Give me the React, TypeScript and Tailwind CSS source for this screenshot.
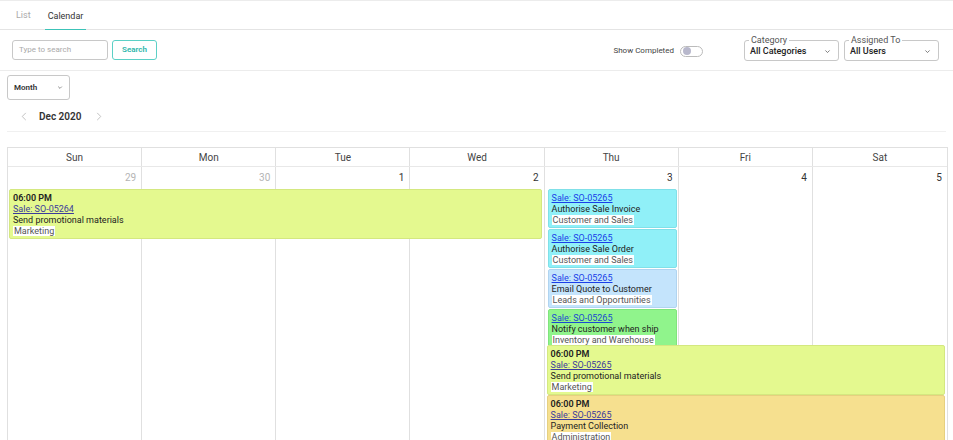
import React from 'react';

interface CalEvent {
  id: number;
  bg: string;
  link: string;
  time?: string;
  sale: string;
  title: string;
  tag: string;
}

const days = ['Sun', 'Mon', 'Tue', 'Wed', 'Thu', 'Fri', 'Sat'];
const dates = [
  { n: 29, muted: true },
  { n: 30, muted: true },
  { n: 1, muted: false },
  { n: 2, muted: false },
  { n: 3, muted: false },
  { n: 4, muted: false },
  { n: 5, muted: false },
];

const lime = 'bg-[#e4f98f] border-[#d4e880]';
const cyan = 'bg-[#90f0f8] border-[#80e0e8]';

const sunEvent: CalEvent = {
  id: 1,
  bg: lime,
  link: 'text-[#3b3b9c]',
  time: '06:00 PM',
  sale: 'Sale: SO-05264',
  title: 'Send promotional materials',
  tag: 'Marketing',
};

const thuEvents: CalEvent[] = [
  {
    id: 2,
    bg: cyan,
    link: 'text-[#1a3ee8]',
    sale: 'Sale: SO-05265',
    title: 'Authorise Sale Invoice',
    tag: 'Customer and Sales',
  },
  {
    id: 3,
    bg: cyan,
    link: 'text-[#1a3ee8]',
    sale: 'Sale: SO-05265',
    title: 'Authorise Sale Order',
    tag: 'Customer and Sales',
  },
  {
    id: 4,
    bg: 'bg-[#c4e4fc] border-[#b0d4f0]',
    link: 'text-[#1a3ee8]',
    sale: 'Sale: SO-05265',
    title: 'Email Quote to Customer',
    tag: 'Leads and Opportunities',
  },
  {
    id: 5,
    bg: 'bg-[#90f48c] border-[#80e47c]',
    link: 'text-[#1a4ad0]',
    sale: 'Sale: SO-05265',
    title: 'Notify customer when ship',
    tag: 'Inventory and Warehouse',
  },
];

const spanEvents: CalEvent[] = [
  {
    id: 6,
    bg: lime,
    link: 'text-[#3b3b9c]',
    time: '06:00 PM',
    sale: 'Sale: SO-05265',
    title: 'Send promotional materials',
    tag: 'Marketing',
  },
  {
    id: 7,
    bg: 'bg-[#f6e08f] border-[#e6d080]',
    link: 'text-[#3b3b9c]',
    time: '06:00 PM',
    sale: 'Sale: SO-05265',
    title: 'Payment Collection',
    tag: 'Administration',
  },
];

const Chevron: React.FC<{ className?: string }> = ({ className }) => (
  <svg viewBox="0 0 10 6" className={className} fill="none" stroke="currentColor" strokeWidth="1.2">
    <path d="M2 1.5 L5 4.5 L8 1.5" />
  </svg>
);

const OutlinedSelect: React.FC<{ label: string; value: string }> = ({ label, value }) => (
  <div className="relative h-[21px] w-[95px] rounded-[3px] border border-[#c8c8c8]">
    <span className="absolute -top-[6px] left-[4px] bg-white px-[2px] text-[9px] leading-[10px] text-[#555]">
      {label}
    </span>
    <div className="flex h-full items-center justify-between pl-[5px] pr-[7px] pt-[2px]">
      <span className="text-[9px] font-medium text-[#222]">{value}</span>
      <Chevron className="h-[5px] w-[7px] text-[#666]" />
    </div>
  </div>
);

const EventCard: React.FC<{ ev: CalEvent; className: string }> = ({ ev, className }) => (
  <div
    className={`${className} ${ev.bg} shrink-0 overflow-hidden rounded-[2px] border px-[3px] pt-[3px] text-[9px] leading-[11px] text-[#222]`}
  >
    {ev.time && <div className="font-semibold">{ev.time}</div>}
    <div className={`underline ${ev.link}`}>{ev.sale}</div>
    <div>{ev.title}</div>
    <div>
      <span className="bg-white px-[1px] text-[#555]">{ev.tag}</span>
    </div>
  </div>
);

const App: React.FC = () => {
  return (
    <div
      className="h-[440px] w-[953px] overflow-hidden border-t border-[#ececec] bg-white text-[#333]"
      style={{ fontFamily: 'Roboto, "Noto Sans", sans-serif' }}
    >
      <div className="flex h-[29px] items-end gap-[14px] border-b border-[#e4e4e4] pl-[16px]">
        <div className="pb-[7px] text-[9px] text-[#aaa]">List</div>
        <div className="-mb-px border-b-[1.5px] border-[#3cc3b8] px-[3px] pb-[6px] text-[9px] text-[#333]">
          Calendar
        </div>
      </div>

      <div className="flex h-[41px] items-center border-b border-[#ececec] pl-[12px] pr-[14px]">
        <div className="flex h-[20px] w-[96px] items-center rounded-[3px] border border-[#c8c8c8] px-[6px] text-[8px] text-[#aaa]">
          Type to search
        </div>
        <button className="ml-[4px] h-[20px] w-[45px] rounded-[3px] border border-[#5cd0c6] text-[8px] font-semibold text-[#2bb5aa]">
          Search
        </button>
        <div className="ml-auto flex items-center gap-[6px] pt-[2px]">
          <span className="text-[8px] text-[#444]">Show Completed</span>
          <div className="flex h-[11px] w-[23px] items-center rounded-full border border-[#bbb] px-[2px]">
            <div className="h-[8px] w-[8px] rounded-full bg-[#b8b8cc]" />
          </div>
        </div>
        <div className="ml-[41px] flex gap-[5px] pt-[1px]">
          <OutlinedSelect label="Category" value="All Categories" />
          <OutlinedSelect label="Assigned To" value="All Users" />
        </div>
      </div>

      <div className="px-[7px] pt-[4px]">
        <div className="flex h-[25px] w-[63px] items-center justify-between rounded-[3px] border border-[#c8c8c8] pl-[6px] pr-[6px]">
          <span className="text-[8px] font-semibold text-[#333]">Month</span>
          <Chevron className="h-[5px] w-[6px] text-[#666]" />
        </div>
        <div className="mt-[8px] flex h-[24px] items-center border-b border-[#f0f0f0] pb-[7px]">
          <svg viewBox="0 0 6 10" className="ml-[14px] h-[9px] w-[6px] text-[#bbb]" fill="none" stroke="currentColor" strokeWidth="1">
            <path d="M5 1 L1 5 L5 9" />
          </svg>
          <span className="ml-[12px] text-[10px] font-semibold text-[#333]">Dec 2020</span>
          <svg viewBox="0 0 6 10" className="ml-[15px] h-[9px] w-[6px] text-[#bbb]" fill="none" stroke="currentColor" strokeWidth="1">
            <path d="M1 1 L5 5 L1 9" />
          </svg>
        </div>

        <div className="mt-[15px] w-[941px] border border-[#e0e0e0]">
          <div className="grid grid-cols-7 border-b border-[#e8e8e8]">
            {days.map((d, i) => (
              <div
                key={d}
                className={`flex h-[18px] items-center justify-center text-[10px] text-[#444] ${
                  i < 6 ? 'border-r border-[#e0e0e0]' : ''
                }`}
              >
                {d}
              </div>
            ))}
          </div>
          <div className="relative h-[300px]">
            <div className="absolute inset-0 grid grid-cols-7">
              {dates.map((d, i) => (
                <div key={d.n} className={i < 6 ? 'border-r border-[#e0e0e0]' : ''}>
                  <div
                    className={`pr-[5px] pt-[4px] text-right text-[10px] leading-[14px] ${
                      d.muted ? 'text-[#b4b4b4]' : 'text-[#333]'
                    }`}
                  >
                    {d.n}
                  </div>
                </div>
              ))}
            </div>
            <div className="relative grid grid-cols-7 items-start pt-[22px]">
              <EventCard ev={sunEvent} className="col-start-1 col-end-5 ml-px mr-[3px] h-[50px]" />
              <div className="col-start-5 col-end-6 ml-[3px] mr-[2px] flex h-[156px] flex-col gap-px overflow-hidden">
                {thuEvents.map((ev) => (
                  <EventCard key={ev.id} ev={ev} className="h-[39px]" />
                ))}
              </div>
              <div className="col-start-5 col-end-8 mx-[2px] flex flex-col">
                {spanEvents.map((ev) => (
                  <EventCard key={ev.id} ev={ev} className="h-[50px]" />
                ))}
              </div>
            </div>
          </div>
        </div>
      </div>
    </div>
  );
};

export default App;
